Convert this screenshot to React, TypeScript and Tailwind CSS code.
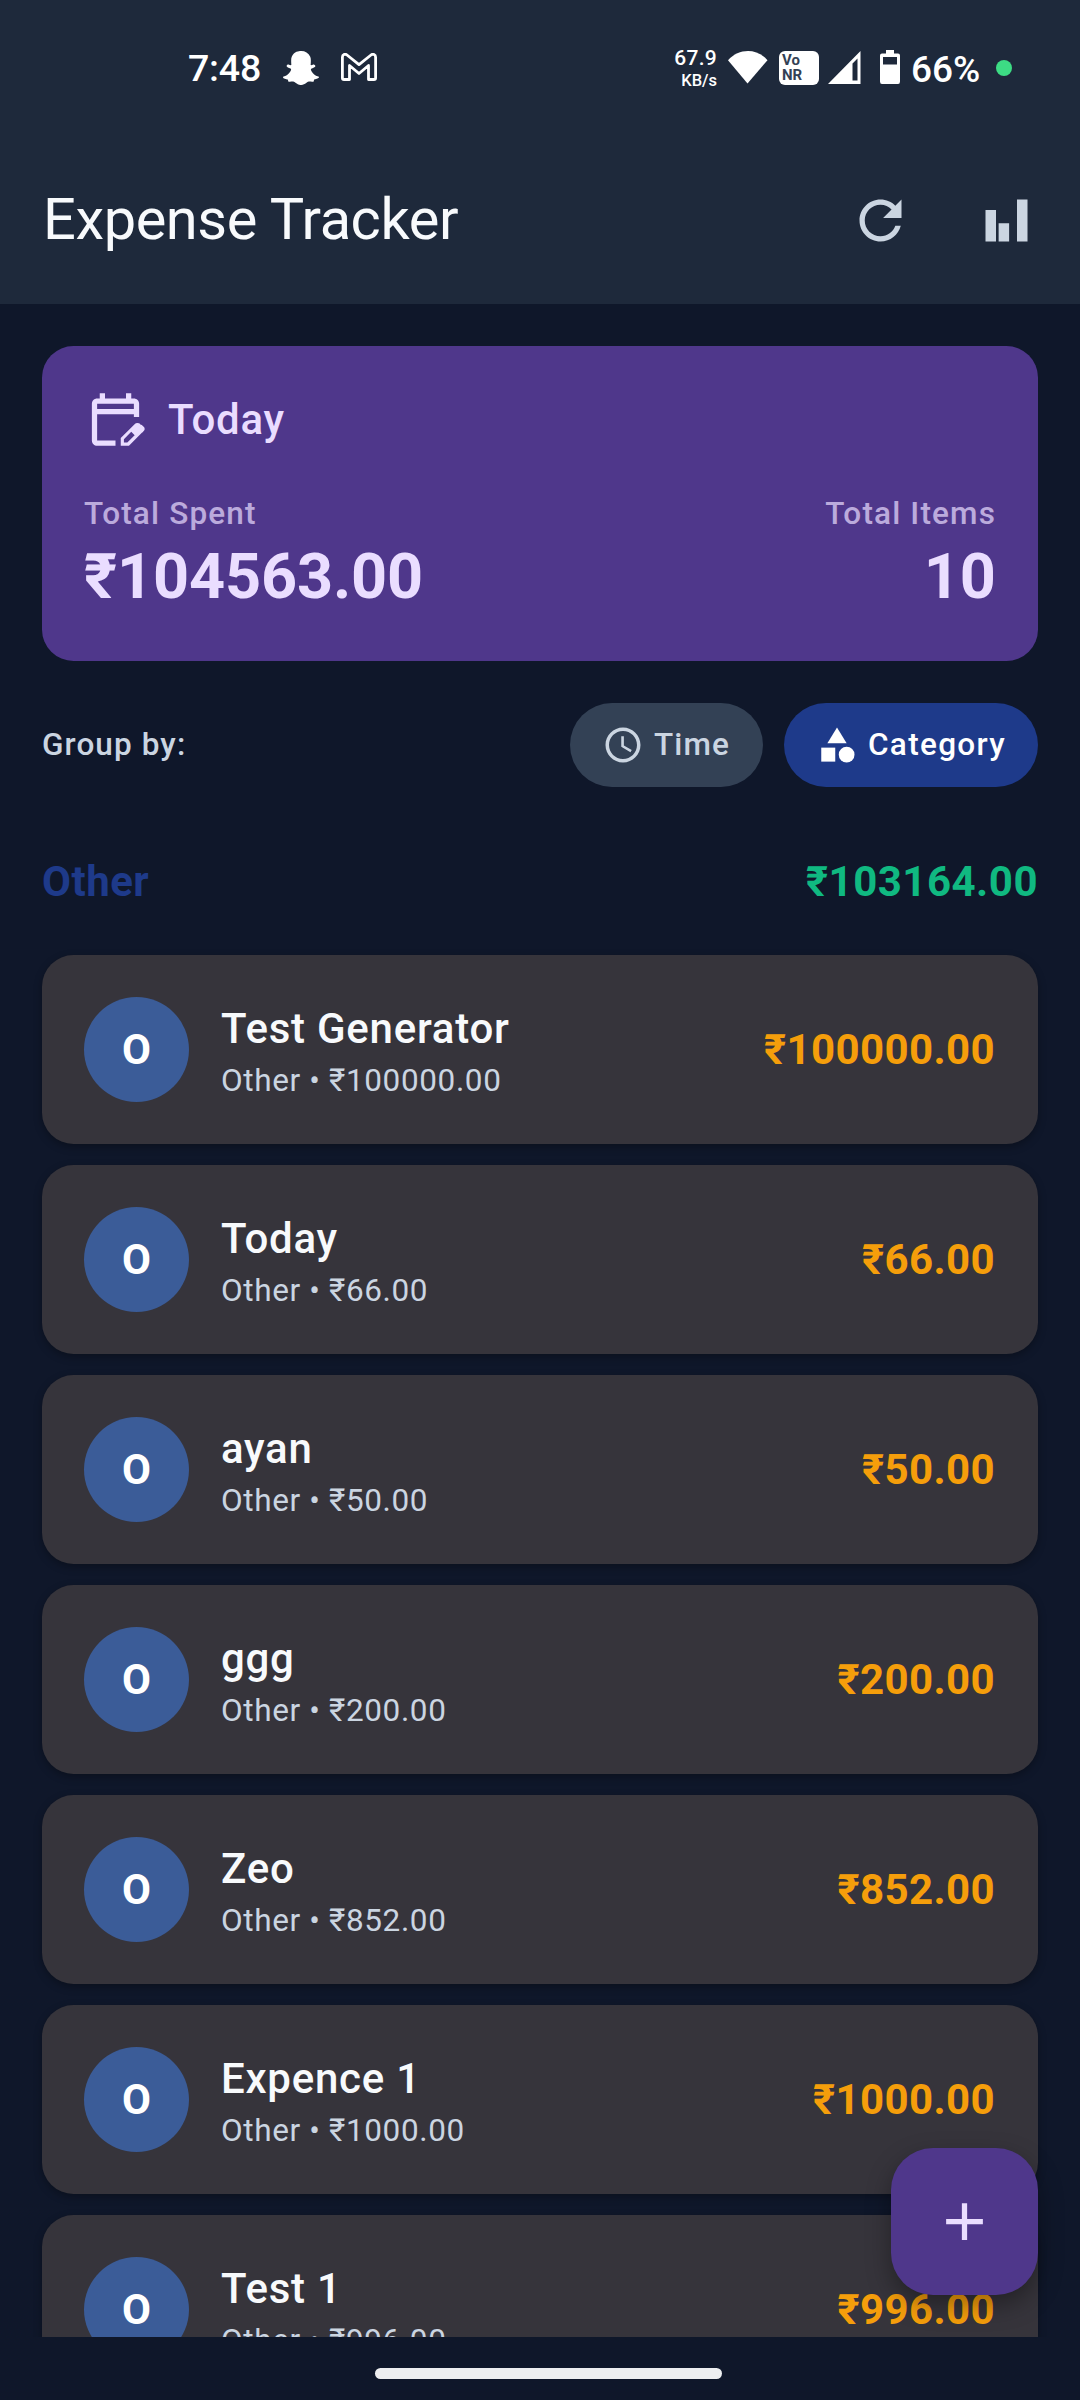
import type { ReactNode } from "react";
import { FaSnapchatGhost } from "react-icons/fa";

type Expense = { name: string; amount: string };

const expenses: Expense[] = [
  { name: "Test Generator", amount: "₹100000.00" },
  { name: "Today", amount: "₹66.00" },
  { name: "ayan", amount: "₹50.00" },
  { name: "ggg", amount: "₹200.00" },
  { name: "Zeo", amount: "₹852.00" },
  { name: "Expence 1", amount: "₹1000.00" },
  { name: "Test 1", amount: "₹996.00" },
];

function Icon({ className, children }: { className: string; children: ReactNode }) {
  return (
    <svg viewBox="0 0 24 24" fill="currentColor" className={`shrink-0 ${className}`}>
      {children}
    </svg>
  );
}

function StatusBar() {
  return (
    <div className="flex h-[136px] items-start text-white">
      <div className="ml-[188px] mt-[45px] w-[95px] text-[37.5px] leading-[46px] font-medium tracking-[-0.2px]">7:48</div>
      <FaSnapchatGhost className="mt-[50px] h-[36px] w-[36px]" />
      <svg viewBox="0 0 36 28" className="ml-[22px] mt-[53px] h-[28px] w-[36px]" fill="none" stroke="currentColor" strokeWidth="2.8" strokeLinejoin="round">
        <path d="M1.4 4.2C1.4 1.6 4 .5 6 2L18 11.6 30 2C32 .5 34.6 1.6 34.6 4.2V25Q34.600 26.500 33 26.500H27.500V12.500L18 20.500 8.500 12.500V26.500H3Q1.400 26.500 1.400 25Z" />
      </svg>
      <div className="ml-auto mt-[46px] flex w-[57px] flex-col items-end font-medium">
        <span className="text-[21px] leading-[25px] tracking-[0.3px]">67.9</span>
        <span className="text-[16.5px] leading-[19px]">KB/s</span>
      </div>
      <svg viewBox="0 0 40 33" className="ml-[11px] mt-[51px] h-[33px] w-[40px]" fill="currentColor">
        <path d="M0 9.2C11-3 29-3 39.5 9.2L19.5 32.5Z" />
      </svg>
      <div className="ml-[11px] mt-[51px] h-[34px] w-[40px] rounded-[6px] bg-white pt-[2px] pl-[3px] text-[15px] leading-[15px] font-bold text-[#334155]">
        <div>Vo</div>
        <div>NR</div>
      </div>
      <svg viewBox="0 0 33 33" className="ml-[9px] mt-[51px] h-[33px] w-[33px]" fill="currentColor" fillRule="evenodd">
        <path d="M0 33 32.5 0V33ZM24.5 12.5V29.5H29.5V7.5Z" />
      </svg>
      <svg viewBox="0 0 20 34" className="ml-[19px] mt-[50px] h-[34px] w-[20px]" fill="currentColor" fillRule="evenodd">
        <path d="M6 0H14V3.5H18Q20 3.5 20 5.500V31.500Q20 34 18 34H2Q0 34 0 31.500V5.500Q0 3.500 2 3.500H6ZM3 7V14.500H17V7Z" />
      </svg>
      <div className="ml-[11px] mt-[47px] w-[85px] text-[37px] leading-[46px] font-medium">66%</div>
      <div className="mt-[60px] mr-[68px] h-4 w-4 rounded-full bg-[#3ddc84]" />
    </div>
  );
}

function Header() {
  return (
    <header className="h-[304px] shrink-0 bg-[#1e293b]">
      <StatusBar />
      <div className="flex h-[168px] items-center px-[42px]">
        <h1 className="grow pl-px text-[57.75px] leading-[73.5px] font-normal tracking-[-0.42px] text-[#f8fafc]">Expense Tracker</h1>
        <div className="flex gap-[63px] text-[#cbd5e1]">
          <Icon className="size-[63px]">
            <path d="M17.65 6.35C16.2 4.9 14.21 4 12 4c-4.42 0-7.99 3.58-7.99 8s3.57 8 7.99 8c3.73 0 6.84-2.55 7.73-6h-2.08c-.82 2.33-3.04 4-5.65 4-3.31 0-6-2.69-6-6s2.69-6 6-6c1.66 0 3.14.69 4.22 1.78L13 11h7V4l-2.350 2.350z" />
          </Icon>
          <Icon className="size-[63px]">
            <path d="M4 8h4v12H4zM9 13h4v7H9zM16 4h4v16h-4z" />
          </Icon>
        </div>
      </div>
    </header>
  );
}

function SummaryCard() {
  return (
    <section className="h-[315px] rounded-[31.5px] bg-[#4f378b] p-[42px] text-[#eaddff]">
      <div className="flex h-[63px] items-center gap-[21px]">
        <Icon className="size-[63px]">
          <path d="M5 8h14V6H5zm0 14c-.55 0-1.02-.2-1.410-.59S3 20.550 3 20V6c0-.55.2-1.020.59-1.410S4.450 4 5 4h1V2h2v2h8V2h2v2h1c.55 0 1.020.2 1.410.59S21 5.450 21 6v5h-2v-1H5v10h7v2zm17.130-5L20 14.870l.7-.7c.18-.18.42-.28.710-.28s.53.100.71.280l.71.710c.18.180.280.420.280.710s-.1.530-.280.700zM14 22v-2.920l5.270-5.270q.210-.210.490-.340t.580-.130q.300 0 .575.110t.505.340l.880.880q.220.220.335.490t.115.560q0 .280-.105.560t-.325.500L17.120 22zm1.200-1.200h1.300l2.800-2.800-.650-.65-.650-.650-2.800 2.800z" />
        </Icon>
        <span className="text-[42px] leading-[63px] font-medium tracking-[0.75px]">Today</span>
      </div>
      <div className="mt-[42px] flex justify-between">
        <div>
          <div className="text-[31.5px] leading-[42px] font-medium tracking-[1.15px] opacity-70">Total Spent</div>
          <div className="text-[63px] leading-[84px] font-bold tracking-[-0.15px]">₹104563.00</div>
        </div>
        <div className="text-right">
          <div className="text-[31.5px] leading-[42px] font-medium tracking-[1.15px] opacity-70">Total Items</div>
          <div className="text-[63px] leading-[84px] font-bold">10</div>
        </div>
      </div>
    </section>
  );
}

function GroupBy() {
  return (
    <div className="mt-[42px] flex h-[84px] items-center gap-[21px] text-[31.5px] leading-[42px] font-medium tracking-[1.1px]">
      <span className="grow text-[#cbd5e1]">Group by:</span>
      <button className="flex h-full w-[193px] items-center gap-[10.5px] rounded-full bg-[#334155] pl-[31.5px] text-[#cbd5e1]">
        <Icon className="size-[42px]">
          <path d="M11.990 2C6.470 2 2 6.480 2 12s4.470 10 9.990 10C17.520 22 22 17.520 22 12S17.520 2 11.990 2zM12 20c-4.420 0-8-3.580-8-8s3.580-8 8-8 8 3.580 8 8-3.580 8-8 8zm.5-13H11v6l5.250 3.150.750-1.230-4.500-2.670z" />
        </Icon>
        Time
      </button>
      <button className="flex h-full w-[254px] items-center gap-[10.5px] rounded-full bg-[#1e3a8a] pl-[31.5px] tracking-[1.31px] text-white">
        <Icon className="size-[42px]">
          <path d="M12 2l-5.500 9h11z" />
          <circle cx="17.500" cy="17.500" r="4.500" />
          <path d="M3 13.500h8v8H3z" />
        </Icon>
        Category
      </button>
    </div>
  );
}

function ExpenseRow({ name, amount }: Expense) {
  return (
    <li className="flex h-[189px] shrink-0 items-center rounded-[31.5px] bg-[#36343b] px-[42px] shadow-[0_3px_8px_rgba(0,0,0,0.3)]">
      <div className="flex size-[105px] items-center justify-center rounded-full bg-[#3b5c98] text-[42px] font-bold text-white">O</div>
      <div className="ml-[32px] grow">
        <div className="text-[42px] leading-[63px] font-medium tracking-[0.75px] text-[#f8fafc]">{name}</div>
        <div className="text-[31.5px] leading-[42px] tracking-[0.63px] text-[#cbd5e1]">Other • {amount}</div>
      </div>
      <div className="mr-px text-[42px] font-bold tracking-[0.39px] text-[#f59e0b]">{amount}</div>
    </li>
  );
}

export default function App() {
  return (
    <div className="flex h-[2400px] w-[1080px] flex-col overflow-hidden bg-[#0f172a] font-['Roboto',sans-serif]">
      <Header />
      <main className="relative h-[2033px] shrink-0 overflow-hidden px-[42px] pt-[42px]">
        <SummaryCard />
        <GroupBy />
        <div className="mt-[63px] flex justify-between text-[42px] leading-[63px] font-bold tracking-[0.5px]">
          <h2 className="text-[#1e3a8a]">Other</h2>
          <span className="text-[#10b981]">₹103164.00</span>
        </div>
        <ul className="mt-[42px] flex flex-col gap-[21px]">
          {expenses.map((e) => (
            <ExpenseRow key={e.name} {...e} />
          ))}
        </ul>
        <button
          aria-label="Add expense"
          className="absolute right-[42px] bottom-[42px] flex size-[147px] items-center justify-center rounded-[42px] bg-[#4f378b] text-[#eaddff] shadow-[0_10px_24px_rgba(0,0,0,0.35)]"
        >
          <Icon className="size-[63px]">
            <path d="M19 13h-6v6h-2v-6H5v-2h6V5h2v6h6v2z" />
          </Icon>
        </button>
      </main>
      <div className="grow pt-[31px] pl-[375px]">
        <div className="h-[11px] w-[347px] rounded-full bg-[#edeef0]" />
      </div>
    </div>
  );
}
